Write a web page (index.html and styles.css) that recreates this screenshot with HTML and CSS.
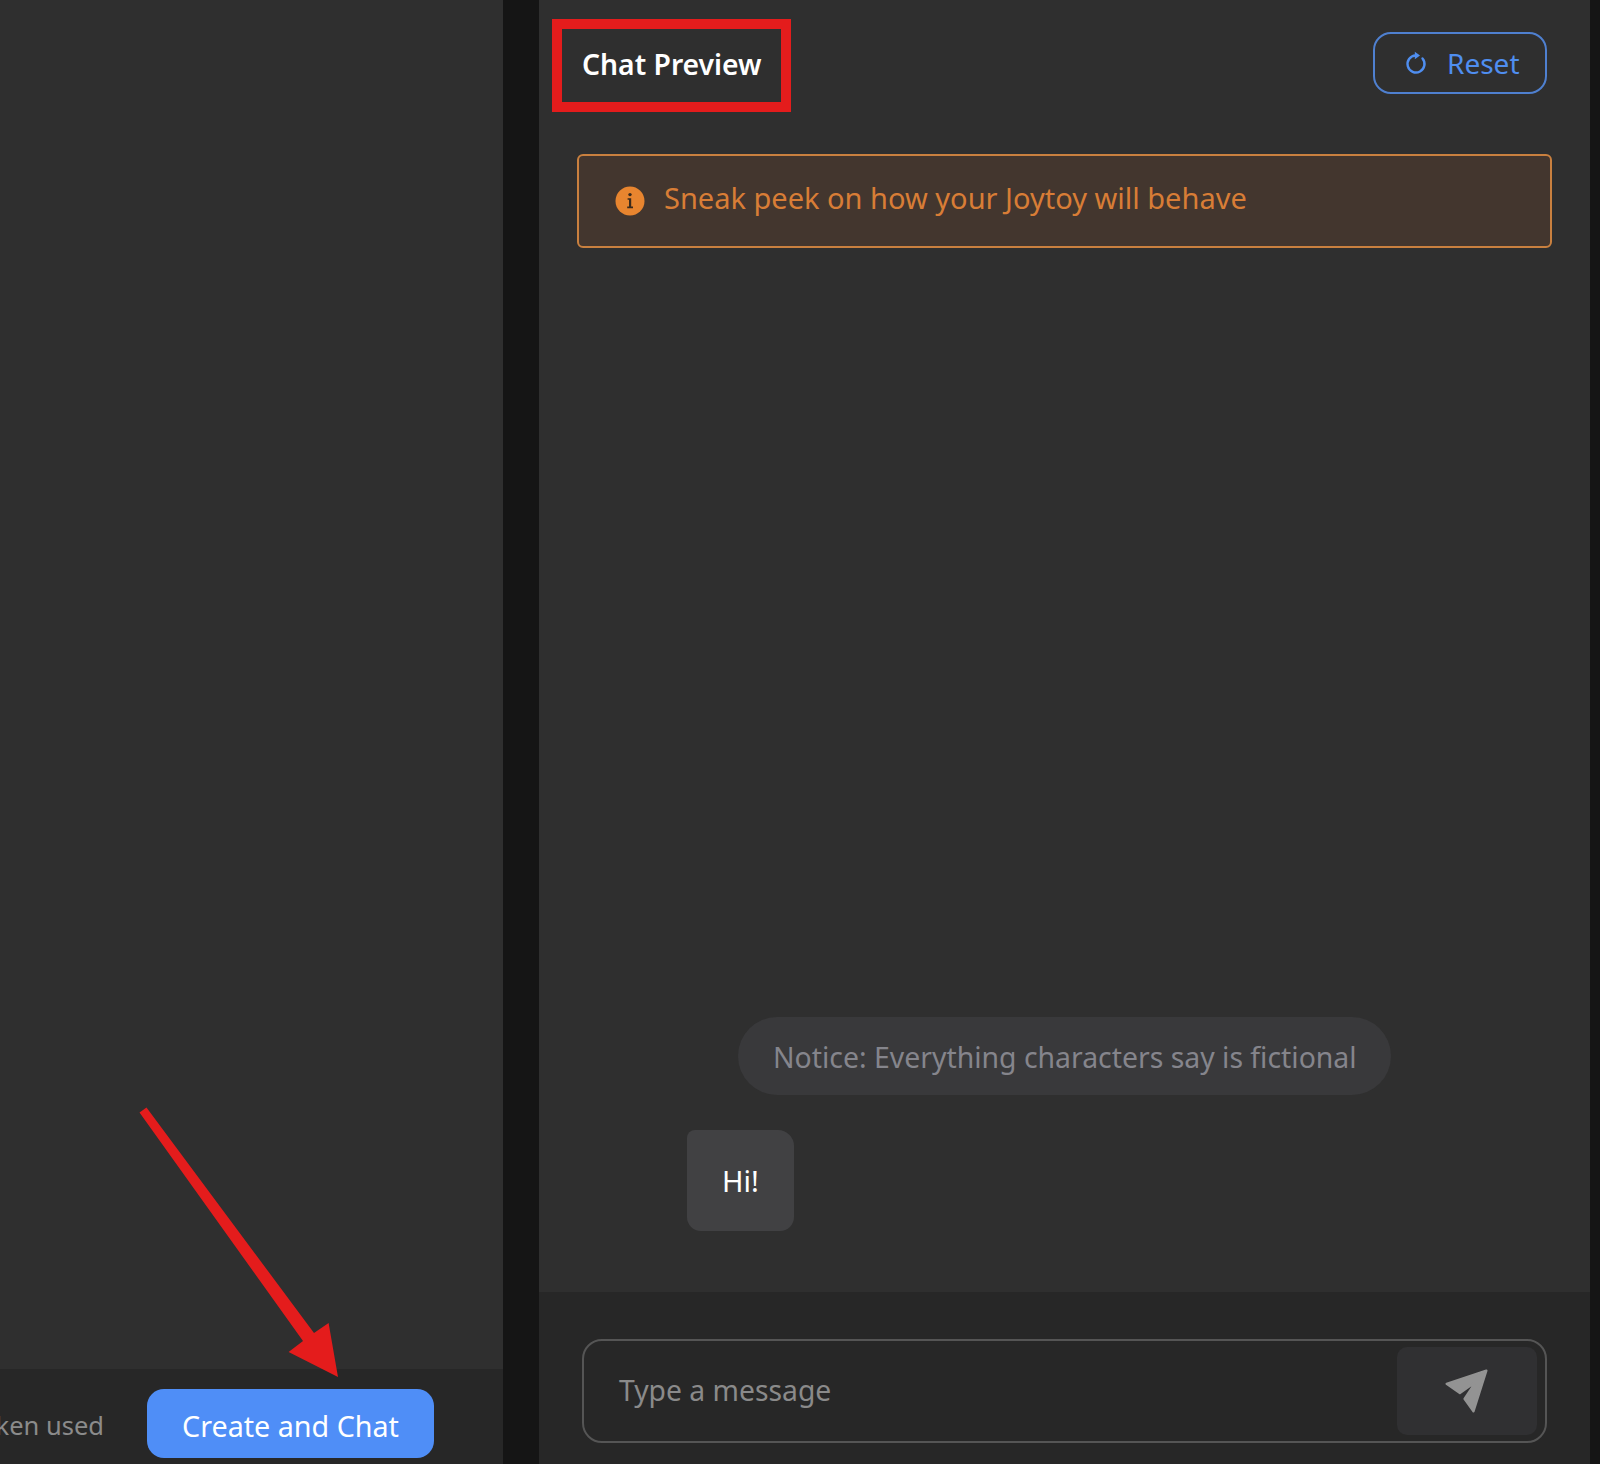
FILE: index.html
```html
<!DOCTYPE html>
<html lang="en">
<head>
<meta charset="utf-8">
<title>Chat Preview</title>
<link rel="stylesheet" href="styles.css">
</head>
<body>
<div class="app">
  <section class="editor">
    <div class="editor-body"></div>
    <footer class="editor-footer">
      <span class="token-note">Token used</span>
      <button class="create-btn" type="button">Create and Chat</button>
    </footer>
  </section>
  <section class="preview">
    <header class="preview-header">
      <h1 class="preview-title">Chat Preview</h1>
      <button class="reset-btn" type="button">
        <svg class="reset-icon" viewBox="0 0 24 24" fill="none" aria-hidden="true">
          <path d="M18.500 7.500A8.500 8.500 0 1 1 11.500 4.500" stroke="#4f8ef0" stroke-width="2.400" stroke-linecap="round"/>
          <path d="M10.800 0.800L16 4.500L10.800 8.200Z" fill="#4f8ef0"/>
        </svg>
        <span>Reset</span>
      </button>
    </header>
    <div class="banner">
      <svg class="banner-icon" viewBox="0 0 30 30" aria-hidden="true">
        <circle cx="15" cy="15" r="14.500" fill="#e8852f"/>
        <circle cx="15" cy="8.600" r="1.700" fill="#3a2a1c"/>
        <path d="M12.600 12.200H16.200V20.600H18V22.200H12.200V20.600H14V13.800H12.600Z" fill="#3a2a1c"/>
      </svg>
      <span>Sneak peek on how your Joytoy will behave</span>
    </div>
    <div class="messages">
      <div class="notice">Notice: Everything characters say is fictional</div>
      <div class="bubble">Hi!</div>
    </div>
    <footer class="composer">
      <div class="input-box">
        <span class="placeholder">Type a message</span>
        <button class="send-btn" type="button" aria-label="Send">
          <svg class="send-icon" viewBox="310 140 145 145" aria-hidden="true">
            <path d="M441 151L321 191L361 219L409 185L375 236L402 274Z" fill="#939393" stroke="#939393" stroke-width="7" stroke-linejoin="round"/>
          </svg>
        </button>
      </div>
    </footer>
  </section>
</div>
<div class="highlight-box"></div>
<svg class="arrow" viewBox="0 0 1600 1464" aria-hidden="true">
  <path d="M139.500 1112.500L146.500 1107.500L314 1333L328.600 1323L338 1377L288.600 1352L303 1341Z" fill="#e41c1c"/>
</svg>
</body>
</html>
```

FILE: styles.css
```css
* {
  box-sizing: border-box;
}

html,
body {
  margin: 0;
  height: 100%;
}

body {
  background: #151515;
  font-family: "Noto Sans", "Open Sans", sans-serif;
  position: relative;
  overflow: hidden;
}

button {
  font: inherit;
  cursor: pointer;
}

.app {
  display: flex;
  height: 1464px;
  width: 1600px;
  padding-right: 10px;
}

.editor {
  width: 503px;
  display: flex;
  flex-direction: column;
  background: #2f2f2f;
  flex-shrink: 0;
}

.editor-body {
  flex: 1;
}

.editor-footer {
  height: 95px;
  background: #272727;
  display: flex;
  justify-content: flex-end;
  align-items: flex-start;
  gap: 43px;
  padding: 20px 69px 0 0;
  overflow: hidden;
}

.token-note {
  flex-shrink: 0;
  white-space: nowrap;
  color: #8b8b8b;
  font-size: 25.500px;
  line-height: 73px;
}

.create-btn {
  flex-shrink: 0;
  width: 287px;
  height: 69px;
  border: 0;
  border-radius: 17px;
  background: #4f8ef7;
  color: #fff;
  font-size: 28.700px;
  padding: 3px 0 0;
}

.preview {
  margin-left: 36px;
  flex: 1;
  display: flex;
  flex-direction: column;
  background: #2f2f2f;
}

.preview-header {
  display: flex;
  justify-content: space-between;
  align-items: center;
  padding: 32px 43px 0 43px;
}

.preview-title {
  margin: 2px 0 0;
  color: #fff;
  font-size: 28.300px;
  font-weight: 600;
}

.reset-btn {
  width: 174px;
  height: 62px;
  border: 2px solid #4f80d0;
  border-radius: 18px;
  background: transparent;
  color: #4f8ef0;
  font-size: 28px;
  display: flex;
  align-items: center;
  justify-content: flex-start;
  gap: 19px;
  padding: 0 0 0 29px;
}

.reset-icon {
  width: 24px;
  height: 24px;
}

.banner {
  margin: 60px 38px 0;
  height: 94px;
  border: 2px solid #c9803f;
  border-radius: 6px;
  background: #43362e;
  color: #d87d36;
  font-size: 29px;
  display: flex;
  align-items: center;
  gap: 19px;
  padding: 0 0 7px 36px;
}

.banner-icon {
  width: 30px;
  height: 30px;
  flex-shrink: 0;
  margin-top: 6px;
}

.messages {
  flex: 1;
  display: flex;
  flex-direction: column;
  justify-content: flex-end;
  padding: 0 0 61px 148px;
}

.notice {
  align-self: flex-start;
  margin-left: 51px;
  height: 78px;
  padding: 0 34px 0 35px;
  border-radius: 39px;
  background: #39393b;
  color: #85858c;
  font-size: 28.400px;
  line-height: 80px;
  white-space: nowrap;
}

.bubble {
  align-self: flex-start;
  margin-top: 35px;
  width: 107px;
  height: 101px;
  border-radius: 8px 16px 14px 14px;
  background: #414143;
  color: #fff;
  font-size: 29px;
  line-height: 101px;
  text-align: center;
}

.composer {
  height: 172px;
  background: #272727;
  padding: 47px 43px 0 43px;
}

.input-box {
  height: 104px;
  border: 2px solid #555;
  border-radius: 20px;
  display: flex;
  align-items: center;
  justify-content: space-between;
  padding: 0 8px 0 35px;
}

.placeholder {
  color: #8a8a8a;
  font-size: 28.300px;
  margin-bottom: 2px;
}

.send-btn {
  width: 140px;
  height: 88px;
  border: 0;
  border-radius: 10px;
  background: #303032;
  display: flex;
  align-items: center;
  justify-content: center;
  padding: 0;
}

.send-icon {
  width: 48px;
  height: 48px;
}

.highlight-box {
  position: absolute;
  left: 552px;
  top: 19px;
  width: 239px;
  height: 93px;
  border: 10px solid #e41c1c;
  pointer-events: none;
}

.arrow {
  position: absolute;
  left: 0;
  top: 0;
  width: 1600px;
  height: 1464px;
  pointer-events: none;
}
```
